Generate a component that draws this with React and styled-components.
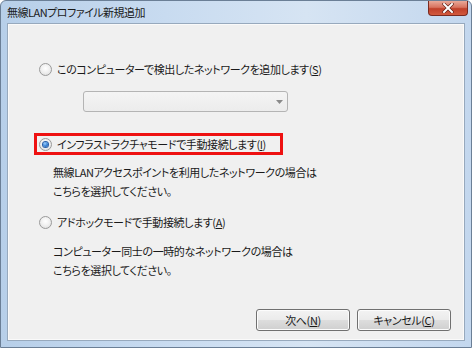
import React from "react";
import styled, { createGlobalStyle } from "styled-components";

const Global = createGlobalStyle`
  html, body { margin: 0; padding: 0; background: #ffffff; }
  body { font-family: "Noto Sans CJK JP", "Noto Sans", sans-serif; }
`;

const Window = styled.div`
  width: 472px;
  height: 348px;
  box-sizing: border-box;
  border: 1px solid #6b7f96;
  border-radius: 6px 6px 0 0;
  background: linear-gradient(to right, #b7cfe9 0%, #c8dbf0 35%, #d6e4f3 65%, #c3d7ee 100%);
  display: flex;
  flex-direction: column;
  padding: 0 6px 6px 6px;
`;

const TitleBar = styled.div`
  height: 22px;
  display: flex;
  align-items: flex-start;
  justify-content: space-between;
  flex-shrink: 0;
`;

const Title = styled.div`
  font-size: 11px;
  line-height: 22px;
  color: #1a1a1a;
  letter-spacing: -0.5px;
  font-feature-settings: "palt";
`;

const CloseButton = styled.div`
  width: 40px;
  height: 15px;
  margin-right: -3px;
  box-sizing: border-box;
  border: 1px solid #7a2a20;
  border-top: none;
  border-radius: 0 0 4px 4px;
  background: linear-gradient(to bottom, #e9a999 0%, #d8735f 45%, #c0402a 55%, #d25a3e 100%);
  display: flex;
  align-items: center;
  justify-content: center;
`;

const Body = styled.div`
  flex: 1;
  background: #f0f0f0;
  border: 1px solid #97a9bd;
  box-shadow: inset 0 0 0 1px #fafafa;
  display: flex;
  flex-direction: column;
  padding: 37px 0 9px 29px;
`;

const OptionRow = styled.label`
  display: flex;
  align-items: center;
  height: 16px;
  gap: 5px;
  padding: 0 ${(p) => (p.$highlight ? "14px" : "0")} 0 2px;
  width: fit-content;
  outline: ${(p) => (p.$highlight ? "3px solid #ee1111" : "none")};
  margin-top: ${(p) => p.$mt || 0}px;
`;

const Radio = styled.span`
  width: 13px;
  height: 13px;
  box-sizing: border-box;
  border-radius: 50%;
  border: 1px solid #9a9a9a;
  background: radial-gradient(circle at 50% 40%, #ffffff 0%, #f1f1f1 45%, #d9d9d9 100%);
  display: flex;
  align-items: center;
  justify-content: center;
  flex-shrink: 0;
`;

const RadioDot = styled.span`
  width: 5px;
  height: 5px;
  border-radius: 50%;
  background: radial-gradient(circle at 40% 35%, #9ed0ff 0%, #3a84d6 50%, #1a4f9a 100%);
  box-shadow: 0 0 0 1px #2a5fa8;
`;

const Label = styled.span`
  font-size: 11px;
  line-height: 16px;
  letter-spacing: -0.4px;
  color: #1a1a1a;
  font-feature-settings: "palt";
  white-space: nowrap;
`;

const Key = styled.span`
  text-decoration: underline;
  text-underline-offset: 1px;
`;

const Select = styled.div`
  margin: 14px 0 0 46px;
  width: 205px;
  height: 21px;
  box-sizing: border-box;
  border: 1px solid #b4b4b4;
  border-radius: 3px;
  background: linear-gradient(to bottom, #f4f4f4, #ececec);
  display: flex;
  align-items: center;
  justify-content: flex-end;
  padding-right: 4px;
`;

const Desc = styled.div`
  margin: ${(p) => p.$mt}px 0 0 16px;
  font-size: 11px;
  line-height: 19px;
  letter-spacing: -0.4px;
  color: #1a1a1a;
  font-feature-settings: "palt";
`;

const ButtonRow = styled.div`
  margin-top: auto;
  display: flex;
  justify-content: flex-end;
  gap: 7px;
  padding-right: 13px;
`;

const Button = styled.div`
  width: 94px;
  height: 22px;
  box-sizing: border-box;
  border: 1px solid #707070;
  border-radius: 3px;
  background: linear-gradient(to bottom, #f3f3f3 0%, #ebebeb 48%, #dddddd 52%, #cfcfcf 100%);
  box-shadow: inset 0 0 0 1px #fcfcfc;
  display: flex;
  align-items: center;
  justify-content: center;
  font-size: 11px;
  letter-spacing: -0.4px;
  color: #1a1a1a;
  font-feature-settings: "palt";
`;

function Option({ checked, highlight, mt, children }) {
  return (
    <OptionRow $highlight={highlight} $mt={mt}>
      <Radio>{checked && <RadioDot />}</Radio>
      <Label>{children}</Label>
    </OptionRow>
  );
}

export default function App() {
  return (
    <>
      <Global />
      <Window>
        <TitleBar>
          <Title>無線LANプロファイル新規追加</Title>
          <CloseButton>
            <svg width="12" height="10" viewBox="0 0 12 10">
              <path d="M2 1 L10 9 M10 1 L2 9" stroke="#5a1a10" strokeWidth="3.2" strokeLinecap="square" />
              <path d="M2 1 L10 9 M10 1 L2 9" stroke="#ffffff" strokeWidth="2" strokeLinecap="square" />
            </svg>
          </CloseButton>
        </TitleBar>
        <Body>
          <Option>
            このコンピューターで検出したネットワークを追加します(<Key>S</Key>)
          </Option>
          <Select>
            <svg width="7" height="4" viewBox="0 0 7 4">
              <path d="M0 0 H7 L3.5 4 Z" fill="#8a8a8a" />
            </svg>
          </Select>
          <Option checked highlight mt={24}>
            インフラストラクチャモードで手動接続します(<Key>I</Key>)
          </Option>
          <Desc $mt={11}>
            無線LANアクセスポイントを利用したネットワークの場合は
            <br />
            こちらを選択してください。
          </Desc>
          <Option mt={13}>
            アドホックモードで手動接続します(<Key>A</Key>)
          </Option>
          <Desc $mt={12}>
            コンピューター同士の一時的なネットワークの場合は
            <br />
            こちらを選択してください。
          </Desc>
          <ButtonRow>
            <Button>
              次へ(<Key>N</Key>)
            </Button>
            <Button>
              キャンセル(<Key>C</Key>)
            </Button>
          </ButtonRow>
        </Body>
      </Window>
    </>
  );
}
